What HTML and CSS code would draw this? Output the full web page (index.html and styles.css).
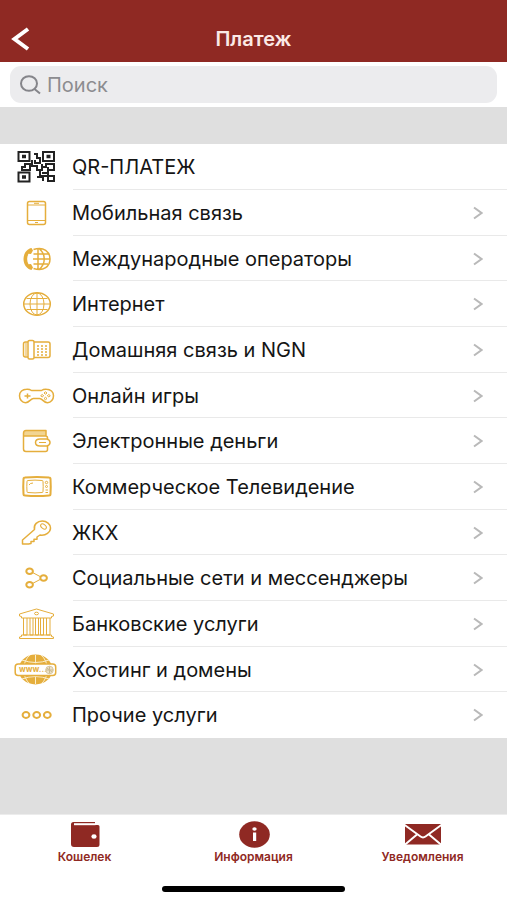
FILE: index.html
```html
<!DOCTYPE html>
<html lang="ru">
<head>
<meta charset="utf-8">
<meta name="viewport" content="width=device-width, initial-scale=1">
<title>Платеж</title>
<link rel="stylesheet" href="styles.css">
</head>
<body>
<header class="topbar">
  <button class="back" type="button" aria-label="Назад">
    <svg width="20" height="26" viewBox="0 0 20 26"><path d="M17 3 3.500 13 17 23"/></svg>
  </button>
  <h1 class="title">Платеж</h1>
</header>

<form class="search" role="search">
  <label class="search-box">
    <svg class="search-icon" width="22" height="22" viewBox="0 0 22 22"><ellipse cx="9" cy="9.500" rx="8" ry="7.300"/><path d="m14.500 15 5.500 4.500"/></svg>
    <input class="search-input" type="search" placeholder="Поиск" aria-label="Поиск">
  </label>
</form>

<main class="content">
  <ul class="list">
    <li class="row"><a class="link" href="#">
      <svg class="icon qr" viewBox="0 0 48 40"><path d="M6.500 5h11v9h-11zM31 5h11v9h-11zM6.500 25.500h11v9h-11z"/><path d="M11 8.800h2v1.500h-2zM35.500 8.800h2v1.500h-2zM11 29.300h2v1.500h-2z"/><path d="M22 7h3v4h3v5h-5v-3M20 13v4h-7v3h-3v3h8v-4h7v4h5v-6M30 20h4v-3h8v6h-6v-3M28 24v5h14v5h-6v-10M25 30h6v4M30 26h6"/></svg>
      <span class="label">QR-ПЛАТЕЖ</span></a></li>
    <li class="row"><a class="link" href="#">
      <svg class="icon" viewBox="0 0 48 40"><rect x="15.500" y="8.500" width="18" height="23" rx="2"/><path class="thin" d="M16 12h17M16 27.500h17M22 10.300h5M23 29.500h3"/></svg>
      <span class="label">Мобильная связь</span><svg class="chevron" viewBox="0 0 10 14"><path d="m1 1.500 7.500 5.500L1 12.500"/></svg></a></li>
    <li class="row"><a class="link" href="#">
      <svg class="icon" viewBox="0 0 48 40"><path class="solid" d="M19.500 9c-4.500.800-8 5.500-8 11s3.500 10.200 8 11l1.500-2.500-2-3.500-2.500.200c-1.800-3.200-1.800-7.200 0-10.400l2.500.200 2-3.500z"/><path d="M21.500 10.500C32 7 38 13 38 20s-6 13-16.500 9.500M26 9.200v21.600M21 20h17M21.500 15h14.500M21.500 25h14.500M27 9.500c7 5.500 7 15.500 0 21"/></svg>
      <span class="label">Международные операторы</span><svg class="chevron" viewBox="0 0 10 14"><path d="m1 1.500 7.500 5.500L1 12.500"/></svg></a></li>
    <li class="row"><a class="link" href="#">
      <svg class="icon" viewBox="0 0 48 40"><ellipse cx="25" cy="20" rx="13.300" ry="11.300"/><path class="thin" d="M25 9v22M12 20h26M14.500 14.500h21M14.500 25.500h21"/><ellipse class="thin" cx="25" cy="20" rx="7" ry="11"/></svg>
      <span class="label">Интернет</span><svg class="chevron" viewBox="0 0 10 14"><path d="m1 1.500 7.500 5.500L1 12.500"/></svg></a></li>
    <li class="row"><a class="link" href="#">
      <svg class="icon" viewBox="0 0 48 40"><rect x="16" y="10.500" width="6" height="18.500" rx="1.500"/><path d="M16 12h-2.500q-2 0-2 2v11q0 2 2 2H16M22 12h14q2 0 2 2v11.500q0 2-2 2H22"/><path class="thin" d="M14 12.500v14"/><path class="keys" d="M25 16h10M25 19h10M25 22h10M25 25h10"/></svg>
      <span class="label">Домашняя связь и NGN</span><svg class="chevron" viewBox="0 0 10 14"><path d="m1 1.500 7.500 5.500L1 12.500"/></svg></a></li>
    <li class="row"><a class="link" href="#">
      <svg class="icon" viewBox="0 0 48 40"><path d="M14.500 13.200q3-.200 5 1.300h10q2-1.500 5-1.300c4 0 7 2.800 7 6.500s-2.500 7-6 7c-4 0-5-4.200-8-4.200h-6c-3 0-4 4.200-8 4.200-3.500 0-6-3.300-6-7s3-6.500 7-6.500z"/><path d="M12.500 20h6M15.500 17.500v5"/><path class="thin" d="M33.500 15.800l1.500 1.200-1.500 1.200-1.500-1.200zM33.500 21.300l1.500 1.200-1.500 1.200-1.500-1.200zM30.200 18.500l1.500 1.200-1.500 1.200-1.500-1.200zM36.800 18.500l1.500 1.200-1.500 1.200-1.500-1.200z"/></svg>
      <span class="label">Онлайн игры</span><svg class="chevron" viewBox="0 0 10 14"><path d="m1 1.500 7.500 5.500L1 12.500"/></svg></a></li>
    <li class="row"><a class="link" href="#">
      <svg class="icon" viewBox="0 0 48 40"><path class="tint" d="M13.500 9.500H34V15H12q-1-4 1.500-5.500z"/><path d="M34 15V9.500H14q-2.500 0-2.500 3V28q0 2.500 2.500 2.500h19.500q2 0 2-2v-3.500M11.500 15h22q2 0 2 2v1"/><path d="M35 18h-7q-4.500 0-4.500 3.500t4.500 3.500h7q3-1 3-3.500t-3-3.500z"/><path class="thin" d="M27 21.500h7"/></svg>
      <span class="label">Электронные деньги</span><svg class="chevron" viewBox="0 0 10 14"><path d="m1 1.500 7.500 5.500L1 12.500"/></svg></a></li>
    <li class="row"><a class="link" href="#">
      <svg class="icon" viewBox="0 0 48 40"><path class="wide" d="M13 10.500q12-1 24 0 1.500 0 1.500 1.500.500 7.500 0 15 0 1.500-1.500 1.500-12 1-24 0-1.500 0-1.500-1.500-.500-7.500 0-15 0-1.500 1.500-1.500z"/><path class="thin" d="M16 13.500q7-.800 14 0 1 0 1 1 .400 5 0 10 0 1-1 1-7 .800-14 0-1 0-1-1-.400-5 0-10 0-1 1-1zM17 18q1-2 4-2"/><circle class="thin" cx="34.500" cy="15.500" r="1.200"/><circle class="thin" cx="34.500" cy="19.500" r="1"/><path class="thin" d="M33.500 23h2.500M33.500 25.500h2.500"/></svg>
      <span class="label">Коммерческое Телевидение</span><svg class="chevron" viewBox="0 0 10 14"><path d="m1 1.500 7.500 5.500L1 12.500"/></svg></a></li>
    <li class="row"><a class="link" href="#">
      <svg class="icon" viewBox="0 0 48 40"><path d="M10.500 31v-4l12-10.500c-1.200-5 3-8.500 7.800-8.500 4.500 0 8.200 3.200 8.200 7s-4.500 8-10.500 7l-3 2v2.200h-3v2.300h-3v2l-2.500.500z"/><ellipse class="thin" cx="31.500" cy="13.500" rx="3.300" ry="2" transform="rotate(38 31.500 13.500)"/></svg>
      <span class="label">ЖКХ</span><svg class="chevron" viewBox="0 0 10 14"><path d="m1 1.500 7.500 5.500L1 12.500"/></svg></a></li>
    <li class="row"><a class="link" href="#">
      <svg class="icon" viewBox="0 0 48 40"><path class="thin" d="m20.500 14.500 8.500 4.500M20.500 25.500l8.500-4.500"/><g class="wide"><ellipse cx="17.600" cy="13.300" rx="3.300" ry="2.800"/><ellipse cx="31.600" cy="20" rx="3.300" ry="2.800"/><ellipse cx="17.600" cy="26.700" rx="3.300" ry="2.800"/></g></svg>
      <span class="label">Социальные сети и мессенджеры</span><svg class="chevron" viewBox="0 0 10 14"><path d="m1 1.500 7.500 5.500L1 12.500"/></svg></a></li>
    <li class="row"><a class="link" href="#">
      <svg class="icon bank" viewBox="0 0 48 40"><path d="M7.500 12v-2L24.500 5l17 5v2l-2 .500v1.500h-30v-1.500zM9.500 31h30v1.500l2 .500v1.500h-34V33l2-.500z"/><ellipse cx="24.500" cy="9.500" rx="2" ry="1.300"/><path d="M11.500 14v17h3.500V14M18 14v17h3V14M23.500 14v17h3V14M28.500 14v17h3V14M34.500 14v17h3.500V14"/></svg>
      <span class="label">Банковские услуги</span><svg class="chevron" viewBox="0 0 10 14"><path d="m1 1.500 7.500 5.500L1 12.500"/></svg></a></li>
    <li class="row"><a class="link" href="#">
      <svg class="icon" viewBox="0 0 48 40"><ellipse class="solid" cx="23.500" cy="19.500" rx="17" ry="15"/><path class="cut" d="M23.500 5v29M10 10q13.500 5 27 0M10 29q13.500-5 27 0M18 5q-6 5-6.500 14.500Q12 29 18 34M29 5q6 5 6.500 14.500Q35 29 29 34"/><rect class="plate" x="3.200" y="14" width="40.500" height="11.500" rx="3"/><text class="www" x="7" y="22">www...</text><circle class="globe" cx="37.500" cy="20" r="3.800"/><path class="mesh" d="M34 20h7M37.500 16.500v7M35 18l5 4"/></svg>
      <span class="label">Хостинг и домены</span><svg class="chevron" viewBox="0 0 10 14"><path d="m1 1.500 7.500 5.500L1 12.500"/></svg></a></li>
    <li class="row"><a class="link" href="#">
      <svg class="icon" viewBox="0 0 48 40"><g class="wide"><ellipse cx="14" cy="20" rx="3.400" ry="2.900"/><ellipse cx="24.700" cy="20" rx="3.400" ry="2.900"/><ellipse cx="35.300" cy="20" rx="3.400" ry="2.900"/></g></svg>
      <span class="label">Прочие услуги</span><svg class="chevron" viewBox="0 0 10 14"><path d="m1 1.500 7.500 5.500L1 12.500"/></svg></a></li>
  </ul>
</main>

<footer class="bottom">
  <nav class="tabs">
    <a class="tab" href="#"><svg width="40" height="30" viewBox="0 0 40 30"><path d="M8.500 3H30v2H9.500v1H33q1.500 0 1.500 1.500v18Q34.500 28 32 28H9q-3 0-3-3V5.500Q6 3 8.500 3z"/><path class="slot" d="M9 5.200h21.500"/><ellipse class="hole" cx="29" cy="17.500" rx="2.600" ry="2.200"/></svg><span>Кошелек</span></a>
    <a class="tab" href="#"><svg width="40" height="30" viewBox="0 0 40 30"><ellipse cx="20.500" cy="15.500" rx="15.300" ry="13.200"/><ellipse class="hole" cx="20.500" cy="10" rx="2.200" ry="1.700"/><path class="hole" d="M19 13.500h3.200V22H19z"/></svg><span>Информация</span></a>
    <a class="tab" href="#"><svg width="40" height="30" viewBox="0 0 40 30"><path d="M2 5h36v20.500H2z"/><path class="fold" d="m1 5.500 16.500 12q2.500 1.800 5 0L39 5.500M1.500 26 14 15.500M38.500 26 26 15.500"/></svg><span>Уведомления</span></a>
  </nav>
  <div class="home"></div>
</footer>
</body>
</html>
```
FILE: styles.css
```css
* { box-sizing: border-box; }
body {
  margin: 0;
  min-height: 100vh;
  display: flex;
  flex-direction: column;
  background: #fff;
  color: #151515;
  font-family: Inter, "Liberation Sans", sans-serif;
}
a { color: inherit; text-decoration: none; }

.topbar {
  display: grid;
  grid-template-columns: 48px 1fr 48px;
  align-items: center;
  height: 62px;
  padding-top: 16px;
  background: #8f2923;
  color: #fff;
}
.back {
  display: flex;
  padding: 0 0 0 11px;
  border: 0;
  background: none;
}
.back path { fill: none; stroke: #fff; stroke-width: 4; }
.title {
  margin: 0;
  text-align: center;
  font-size: 20px;
  line-height: 24px;
  font-weight: 600;
  color: #fbe9e6;
}

.search { padding: 4px 10px; }
.search-box {
  display: flex;
  align-items: center;
  gap: 5px;
  height: 37px;
  padding: 0 10px;
  border-radius: 11px;
  background: #ececee;
}
.search-icon { flex: none; fill: none; stroke: #85858a; stroke-width: 2; }
.search-input {
  flex: 1;
  min-width: 0;
  padding: 0;
  border: 0;
  outline: 0;
  background: none;
  font: 20px/24px Inter, "Liberation Sans", sans-serif;
  color: #151515;
}
.search-input::placeholder { color: #8c8c90; opacity: 1; }

.content { flex: 1; padding-top: 37px; background: #dfdfdf; }
.list { margin: 0; padding: 0; list-style: none; background: #fff; }
.link { display: flex; align-items: center; height: 46px; padding-left: 12px; position: relative; }
.row:nth-child(3n) .link { height: 45px; }
.row:not(:last-child) .link::after {
  content: "";
  position: absolute;
  left: 73px;
  right: 0;
  bottom: 0;
  height: 1px;
  background: #e9e9e9;
}
.label { flex: 1; padding-left: 12px; font-size: 20px; line-height: 24px; white-space: nowrap; }
.chevron { width: 10px; height: 14px; margin-right: 24px; fill: none; stroke: #b9b9b9; stroke-width: 2; }

.icon { flex: none; width: 48px; height: 40px; fill: none; stroke: #e5ae3c; stroke-width: 1.5; stroke-linejoin: round; }
.icon .thin { stroke-width: 1; }
.icon .wide { stroke-width: 2; }
.icon .solid { fill: #e5ae3c; stroke: none; }
.icon .tint { fill: #f2d592; stroke: none; }
.icon .keys { stroke-dasharray: 2 2; stroke-width: 1.5; }
.icon .cut { stroke: #fbeecd; stroke-width: 1; }
.icon .plate { fill: #fff; }
.icon .www { fill: #e5ae3c; stroke: none; font: bold 8px Inter, sans-serif; }
.icon .globe { fill: #eee2c8; stroke: #d8c7a0; stroke-width: 1; }
.icon .mesh { stroke: #c9b98f; stroke-width: 1; }
.icon.bank { stroke-width: 1; }
.icon.qr { stroke: #222; stroke-width: 2; stroke-linejoin: miter; }

.bottom { display: flex; flex-direction: column; align-items: center; height: 86px; padding-top: 4px; border-top: 1px solid #ececec; background: #fff; }
.tabs { display: grid; grid-template-columns: repeat(3, 1fr); width: 100%; }
.tab {
  display: flex;
  flex-direction: column;
  align-items: center;
  font-size: 12px;
  line-height: 16px;
  font-weight: 600;
  color: #8f2923;
}
.tab svg { fill: #8f2923; }
.tab .hole { fill: #fff; }
.tab .fold { fill: none; stroke: #fff; stroke-width: 2; }
.tab .slot { stroke: #fff; stroke-width: 2; }
.home { width: 36%; height: 6px; margin-top: 21px; border-radius: 3px; background: #000; }
```
